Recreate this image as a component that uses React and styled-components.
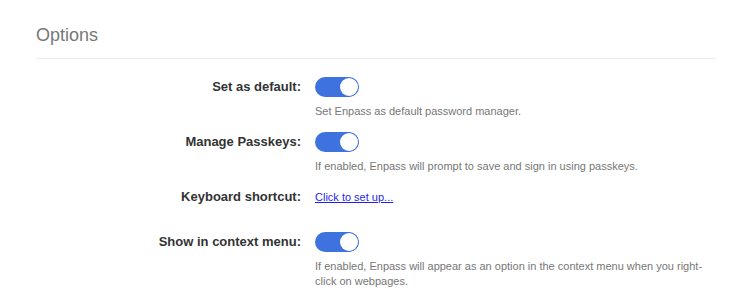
import React from 'react';
import styled, { createGlobalStyle } from 'styled-components';

const GlobalStyle = createGlobalStyle`
    body {
        margin:0;
        background:#fff;
        font-family:"Liberation Sans", Arial, Helvetica, sans-serif;
    }
`;

const Page = styled.div`
    padding:24px 33px 0 36px;
`;

const Title = styled.h2`
    margin:0;
    font-size:18px;
    font-weight:normal;
    line-height:22px;
    color:#777;
`;

const Divider = styled.hr`
    margin:12px 0 18px;
    border:none;
    border-top:1px solid #ececec;
`;

const Row = styled.div`
    display:flex;
    align-items:flex-start;
    gap:14px;
    margin-bottom:${ p => p.$space || 13 }px;
`;

const Label = styled.div`
    flex:0 0 265px;
    text-align:right;
    font-size:13px;
    font-weight:bold;
    line-height:20px;
    color:#333;
`;

const Field = styled.div`
    flex:1;
    min-width:0;
`;

const Toggle = styled.div`
    width:44px;
    height:20px;
    border-radius:10px;
    background:#3d72df;
    display:flex;
    align-items:center;
    justify-content:${ p => p.$on ? 'flex-end' : 'flex-start' };
    padding:1px;
    box-sizing:border-box;
`;

const Knob = styled.span`
    width:18px;
    height:18px;
    border-radius:50%;
    background:#fff;
    box-shadow:0 0 0 0.5px #3d72df;
`;

const Hint = styled.p`
    margin:7px 0 0;
    font-size:11px;
    line-height:15px;
    color:#777;
`;

const SetupLink = styled.a`
    display:inline-block;
    font-size:11px;
    line-height:20px;
    color:#1f1fee;
    text-decoration:underline;
    cursor:pointer;
`;

const options = [
    { label: 'Set as default:', hint: 'Set Enpass as default password manager.' },
    { label: 'Manage Passkeys:', hint: 'If enabled, Enpass will prompt to save and sign in using passkeys.' },
    { label: 'Keyboard shortcut:', link: 'Click to set up...', space: 25 },
    { label: 'Show in context menu:', hint: 'If enabled, Enpass will appear as an option in the context menu when you right-click on webpages.' }
];

const App = () => {
    return (
        <Page>
            <GlobalStyle/>
            <Title>Options</Title>
            <Divider/>
            {options.map(opt => (
                <Row key={opt.label} $space={opt.space}>
                    <Label>{opt.label}</Label>
                    <Field>
                        {opt.link ? (
                            <SetupLink>{opt.link}</SetupLink>
                        ) : (
                            <>
                                <Toggle $on>
                                    <Knob/>
                                </Toggle>
                                <Hint>{opt.hint}</Hint>
                            </>
                        )}
                    </Field>
                </Row>
            ))}
        </Page>
    )
}

export default App;
